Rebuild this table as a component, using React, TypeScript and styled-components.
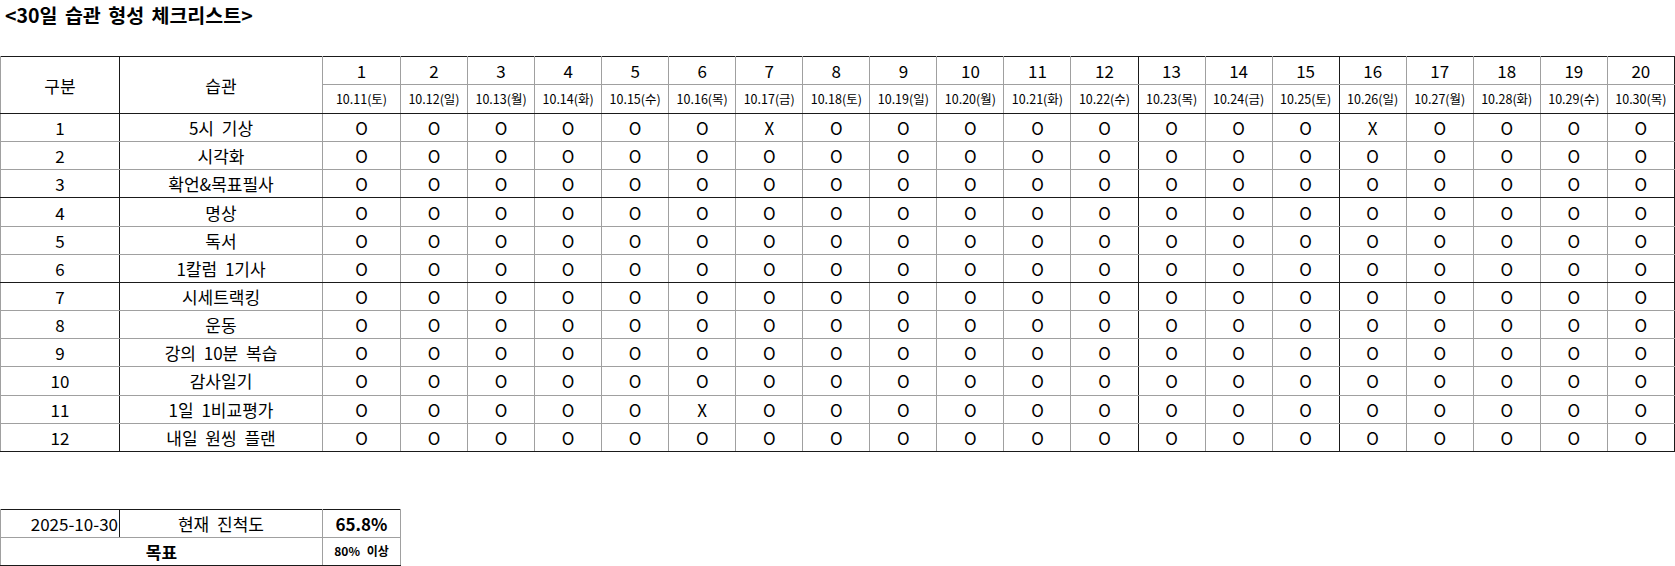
import React from "react";
import styled, { createGlobalStyle } from "styled-components";

const GlobalStyle = createGlobalStyle`
  html, body { margin: 0; padding: 0; background: #ffffff; }
  body { font-family: "Noto Sans CJK KR", "Noto Sans", sans-serif; color: #000; }
`;

const GRAY = "#a0a0a0";
const DARK = "#1a1a1a";

const Page = styled.div`
  width: 1675px;
  height: 566px;
  overflow: hidden;
  background: #fff;
`;

const Title = styled.h1`
  margin: 0;
  height: 56px;
  padding: 3px 0 0 5px;
  box-sizing: border-box;
  font-size: 19.5px;
  font-weight: 700;
  line-height: 24px;
  word-spacing: 3px;
`;

const Sheet = styled.table<{ $width: number }>`
  width: ${(p) => p.$width}px;
  table-layout: fixed;
  border-collapse: collapse;
  border: 1px solid ${DARK};
`;

const Row = styled.tr<{ $h: number; $darkBottom?: boolean }>`
  height: ${(p) => p.$h}px;
  & > td, & > th {
    border-bottom: 1px solid ${(p) => (p.$darkBottom ? DARK : GRAY)};
  }
`;

const Cell = styled.td<{
  $size?: number;
  $bold?: boolean;
  $align?: "left" | "center" | "right";
  $darkRight?: boolean;
}>`
  padding: 0 1px;
  border-left: 1px solid ${GRAY};
  border-right: 1px solid ${(p) => (p.$darkRight ? DARK : GRAY)};
  text-align: ${(p) => p.$align ?? "center"};
  vertical-align: middle;
  font-size: ${(p) => p.$size ?? 17}px;
  font-weight: ${(p) => (p.$bold ? 700 : 400)};
  line-height: 1;
  word-spacing: 4px;
  white-space: nowrap;
  overflow: hidden;
  color: #000;
`;

const HeadCell = styled(Cell).attrs({ as: "th" })``;

const Summary = styled(Sheet)`
  margin-top: 57px;
`;

const DAY_W = 1274 / 19;
const dates = [
  "10.11(토)", "10.12(일)", "10.13(월)", "10.14(화)", "10.15(수)",
  "10.16(목)", "10.17(금)", "10.18(토)", "10.19(일)", "10.20(월)",
  "10.21(화)", "10.22(수)", "10.23(목)", "10.24(금)", "10.25(토)",
  "10.26(일)", "10.27(월)", "10.28(화)", "10.29(수)", "10.30(목)",
];
const habits = [
  "5시 기상", "시각화", "확언&목표필사", "명상", "독서", "1칼럼 1기사",
  "시세트랙킹", "운동", "강의 10분 복습", "감사일기", "1일 1비교평가", "내일 원씽 플랜",
];
const misses: Record<number, number[]> = { 0: [6, 15], 10: [5] };
const darkAfterDay = new Set([11, 14, 19]);
const darkAfterRow = new Set([2, 5, 11]);

export default function App() {
  return (
    <Page>
      <GlobalStyle />
      <Title>&lt;30일 습관 형성 체크리스트&gt;</Title>
      <Sheet $width={1674}>
        <colgroup>
          <col style={{ width: 119 }} />
          <col style={{ width: 203 }} />
          <col style={{ width: 78 }} />
          {dates.slice(1).map((d) => (
            <col key={d} style={{ width: DAY_W }} />
          ))}
        </colgroup>
        <thead>
          <Row $h={28}>
            <HeadCell rowSpan={2} $darkRight style={{ borderBottom: `1px solid ${DARK}` }}>
              구분
            </HeadCell>
            <HeadCell rowSpan={2} style={{ borderBottom: `1px solid ${DARK}` }}>
              습관
            </HeadCell>
            {dates.map((d, i) => (
              <HeadCell key={d} $darkRight={darkAfterDay.has(i)}>
                {i + 1}
              </HeadCell>
            ))}
          </Row>
          <Row $h={29} $darkBottom>
            {dates.map((d, i) => (
              <HeadCell key={d} $size={12.5} $darkRight={darkAfterDay.has(i)}>
                {d}
              </HeadCell>
            ))}
          </Row>
        </thead>
        <tbody>
          {habits.map((h, r) => (
            <Row key={h} $h={28.17} $darkBottom={darkAfterRow.has(r)}>
              <Cell $darkRight>{r + 1}</Cell>
              <Cell>{h}</Cell>
              {dates.map((d, i) => (
                <Cell key={d} $darkRight={darkAfterDay.has(i)}>
                  {misses[r]?.includes(i) ? "X" : "O"}
                </Cell>
              ))}
            </Row>
          ))}
        </tbody>
      </Sheet>
      <Summary $width={400}>
        <colgroup>
          <col style={{ width: 119 }} />
          <col style={{ width: 203 }} />
          <col style={{ width: 78 }} />
        </colgroup>
        <tbody>
          <Row $h={28}>
            <Cell $align="right" $darkRight>2025-10-30</Cell>
            <Cell>현재 진척도</Cell>
            <Cell $bold>65.8%</Cell>
          </Row>
          <Row $h={28} $darkBottom>
            <Cell colSpan={2} $bold>목표</Cell>
            <Cell $bold $size={12}>80% 이상</Cell>
          </Row>
        </tbody>
      </Summary>
    </Page>
  );
}
